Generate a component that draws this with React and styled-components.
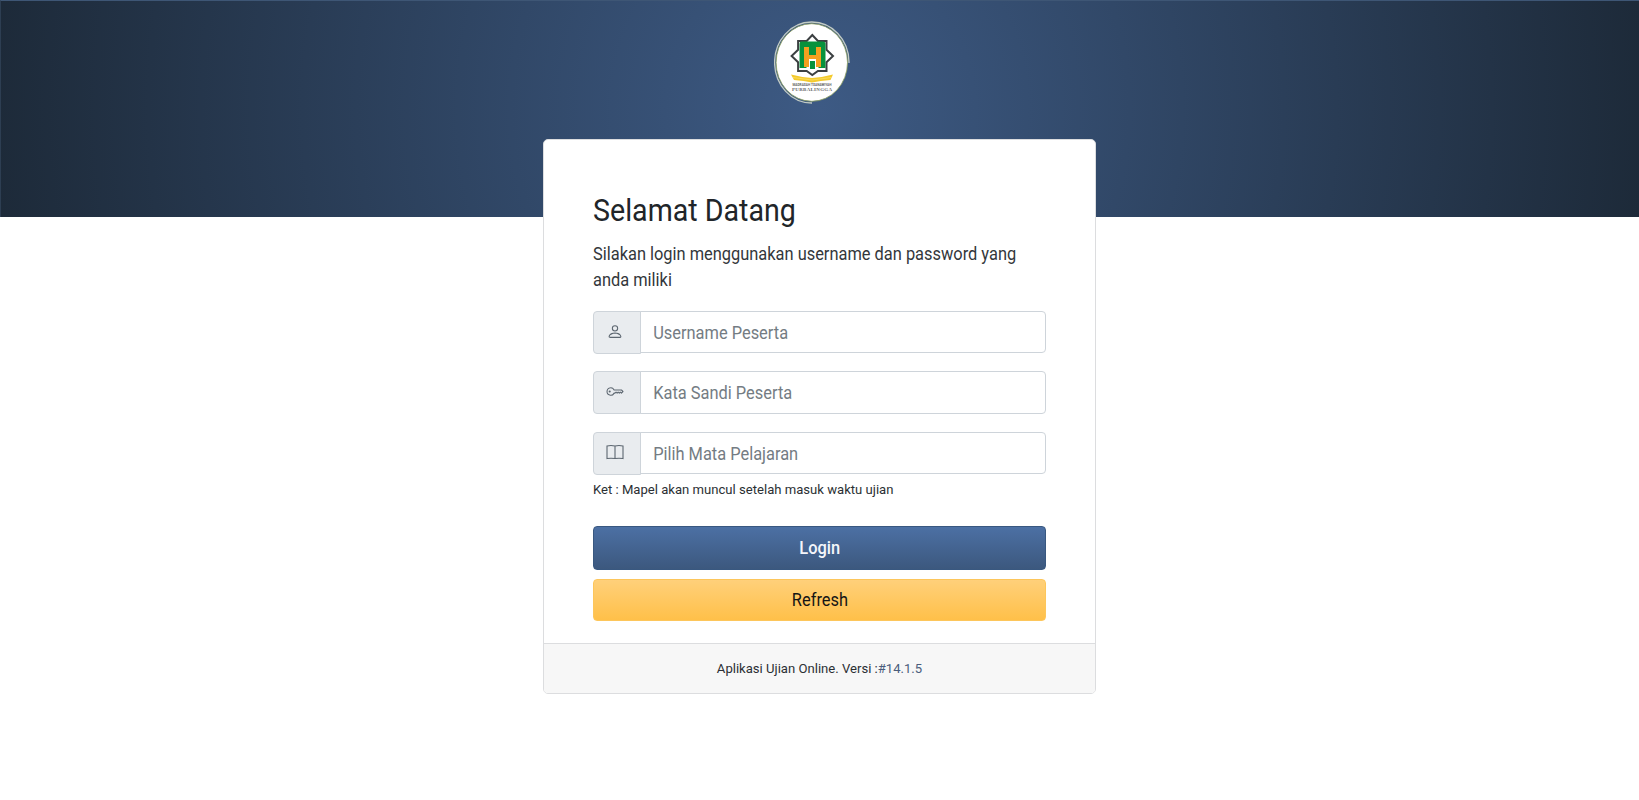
import React from "react";
import styled, { createGlobalStyle } from "styled-components";
import { BsPerson, BsKey } from "react-icons/bs";

const Logo = () => (
  <LogoImage viewBox="0 0 76 84">
    <path d="M75 43V42A37.2 40.5 0 1 0 38 83" fill="none" stroke="#c3ccc4" strokeWidth="1.3" />
    <ellipse cx="37.8" cy="42.5" rx="35.7" ry="38.8" fill="#fff" stroke="#91a35f" strokeWidth="0.8" />
    <g transform="translate(0 1)">
      <path
        d="M38.3 14l5.600 6h8.600v8.800l6.500 6.200-6.500 6.200V50h-8.600l-5.600 4-5.600-4h-8.600v-8.800L17.600 35l6.500-6.200V20h8.600z"
        fill="#fff"
        stroke="#3c4042"
        strokeWidth="2"
      />
      <path d="M27 20.500h22q2.500 0 2.500 2.500v24h-7V37h-12v10h-7V23q0-2.500 1.500-2.500z" fill="#07923c" />
      <path d="M30 26h5v8h7v-8h5v20h-5v-8h-7v8h-5z" fill="#f5a01f" />
      <path d="M36.500 21h4v10h-4zM36 40h5v8h-5z" fill="#07923c" />
    </g>
    <path d="M17 54.500q12 3 21 3.500 9-.5 21-3.500l-2.500 5.500q-10 .5-18.500 2.500-8-2-18-2.500z" fill="#f4ca2c" />
    <path d="M19 57.500q11 1.500 19 2.500 8-1 19-2.500" fill="none" stroke="#fbe273" strokeWidth="0.7" />
    <text x="38" y="66.200" textLength="39" lengthAdjust="spacingAndGlyphs">MADRASAH TSANAWIYAH</text>
    <LogoTown x="38" y="70.700" textLength="40">PURBALINGGA</LogoTown>
  </LogoImage>
);

const BookIcon = () => (
  <svg width="18" height="17" viewBox="0 0 18 17">
    <path
      d="M1 2q4-1 8 0 4-1 8 0v12.500q-4-.6-8 0-4-.6-8 0zM9 2v12.500"
      fill="none"
      stroke="currentColor"
      strokeWidth="1.1"
    />
  </svg>
);

const Field = ({ icon, type, placeholder, short }) => (
  <InputGroup>
    <Addon>{icon}</Addon>
    <InputBox $short={short}>
      <Input type={type} placeholder={placeholder} />
    </InputBox>
  </InputGroup>
);

const App = () => {
  return (
    <>
      <GlobalStyle />
      <Header>
        <Logo />
      </Header>
      <Main>
        <Card>
          <CardBody>
            <Title>Selamat Datang</Title>
            <Intro>Silakan login menggunakan username dan password yang anda miliki</Intro>
            <Fields>
              <Field icon={<BsPerson />} type="text" placeholder="Username Peserta" short />
              <Field icon={<BsKey />} type="password" placeholder="Kata Sandi Peserta" />
              <Field icon={<BookIcon />} type="text" placeholder="Pilih Mata Pelajaran" short />
            </Fields>
            <Note>Ket : Mapel akan muncul setelah masuk waktu ujian</Note>
            <Button $primary>
              <Label>Login</Label>
            </Button>
            <Button>
              <Label>Refresh</Label>
            </Button>
          </CardBody>
          <CardFooter>
            Aplikasi Ujian Online. Versi :<Version href="#">#14.1.5</Version>
          </CardFooter>
        </Card>
      </Main>
    </>
  );
};

const GlobalStyle = createGlobalStyle`
  * {
    box-sizing: border-box;
  }
  body {
    margin: 0;
    background: #fff;
    color: #212529;
    font-family: Roboto, "Liberation Sans", sans-serif;
    font-size: 17.5px;
    line-height: 26px;
  }
`;

const Header = styled.header`
  height: 217px;
  padding: 19px 16px 0 0;
  border-top: 1px solid #3e5675;
  border-left: 1px solid #2d3e52;
  background: radial-gradient(circle, #3d5a84 0%, #1d2a39 100%);
  display: flex;
  justify-content: center;
  align-items: flex-start;
`;

const LogoImage = styled.svg`
  width: 76px;
  height: 84px;

  text {
    font-size: 3.8px;
    font-weight: 700;
    fill: #666;
    text-anchor: middle;
  }
`;

const LogoTown = styled.text`
  font-family: "Liberation Serif", serif;
  && {
    font-size: 4.9px;
  }
`;

const Main = styled.main`
  display: flex;
  justify-content: center;
  margin-top: -78px;
`;

const Card = styled.section`
  width: 553px;
  height: 555px;
  display: flex;
  flex-direction: column;
  background: #fff;
  border: 1px solid #dcdddf;
  border-radius: 5px;
  overflow: hidden;
`;

const CardBody = styled.div`
  flex: 1;
  padding: 52px 49px 0;
`;

// the larger type is set slightly condensed
const Title = styled.h1`
  margin: 0 0 12px;
  font-size: 30.5px;
  font-weight: 400;
  line-height: 37px;
  transform: scaleX(0.9375);
  transform-origin: left;
`;

const Intro = styled.p`
  width: 480px;
  margin: 0 0 18px;
  color: #33373b;
  transform: scaleX(0.9375);
  transform-origin: left;
`;

const Fields = styled.div`
  display: grid;
  grid-template-rows: 42px 43px 43px;
  row-gap: 18px;
`;

const InputGroup = styled.div`
  display: flex;
  align-items: flex-start;
`;

const Addon = styled.span`
  width: 48px;
  height: 43px;
  padding-right: 4px;
  display: flex;
  justify-content: center;
  align-items: center;
  color: #5c6670;
  background: #e9ecef;
  border: 1px solid #ced4da;
  border-radius: 4px 0 0 4px;

  svg {
    width: 18px;
    height: 17px;
    margin-bottom: 3px;
  }
`;

const InputBox = styled.div`
  flex: 1;
  min-width: 0;
  height: ${(props) => (props.$short ? "42px" : "43px")};
  margin-left: -1px;
  border: 1px solid #ced4da;
  border-radius: 0 4px 4px 0;
`;

const Input = styled.input`
  display: block;
  width: 100%;
  height: 100%;
  padding: 1px 13px 0;
  font: inherit;
  background: transparent;
  border: 0;
  outline: none;
  transform: scaleX(0.9375);
  transform-origin: left;

  &::placeholder {
    color: #747c83;
    opacity: 1;
  }
`;

const Note = styled.small`
  display: block;
  margin: 5px 0 26px;
  color: #2b2f33;
  font-size: 13.1px;
  line-height: 20px;
`;

const Label = styled.span`
  display: inline-block;
  transform: scaleX(0.9375);
`;

const Button = styled.button`
  display: block;
  width: 100%;
  height: ${(props) => (props.$primary ? "44px" : "42px")};
  margin-bottom: 9px;
  padding: 0;
  font: inherit;
  font-weight: ${(props) => (props.$primary ? 500 : 400)};
  border-radius: 4px;
  color: ${(props) => (props.$primary ? "#f4f6fa" : "#151515")};
  border: 1px solid ${(props) => (props.$primary ? "#395880" : "#fdc65b")};
  background: ${(props) =>
    props.$primary
      ? "linear-gradient(#4c70a4, #3c587e)"
      : "linear-gradient(#ffd07a, #ffc049)"};
`;

const CardFooter = styled.footer`
  height: 50px;
  display: flex;
  justify-content: center;
  align-items: center;
  color: #2b2f33;
  font-size: 13.1px;
  background: #f7f7f7;
  border-top: 1px solid #dcdddf;
`;

const Version = styled.a`
  color: #4a5d7c;
  text-decoration: none;
`;

export default App;
